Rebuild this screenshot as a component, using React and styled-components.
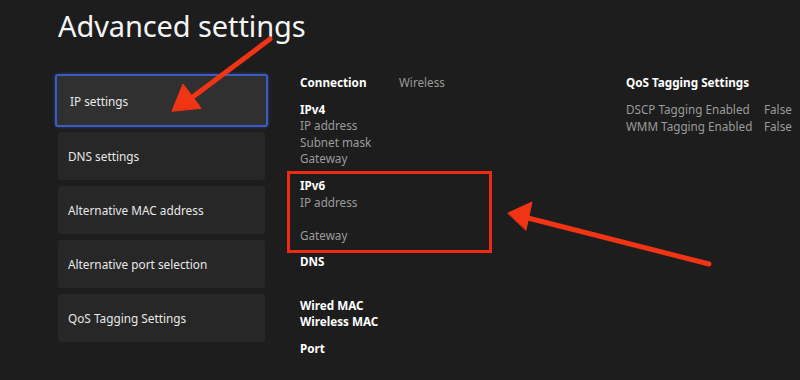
import React from "react";
import styled, { createGlobalStyle } from "styled-components";

const GlobalStyle = createGlobalStyle`
  html, body {
    margin: 0;
    padding: 0;
    background: #1d1d1d;
  }
  body {
    font-family: "Noto Sans", "Open Sans", sans-serif;
    color: #ffffff;
  }
`;

const StyledPage = styled.div`
  position: relative;
  width: 800px;
  height: 380px;
  overflow: hidden;
  background: #1d1d1d;
  padding: 6px 0 0 55px;
  box-sizing: border-box;
`;

const StyledTitle = styled.h1`
  margin: 0 0 0 3px;
  height: 68px;
  font-size: 29px;
  font-weight: 400;
  letter-spacing: -0.1px;
  color: #f4f4f4;
`;

const StyledBody = styled.div`
  display: flex;
  align-items: flex-start;
`;

const StyledMenu = styled.div`
  display: flex;
  flex-direction: column;
  flex-shrink: 0;
  gap: 6px;
  width: 213px;
`;

const StyledMenuItem = styled.div`
  display: flex;
  align-items: center;
  height: ${(p) => (p.$active ? "53px" : "48px")};
  margin: ${(p) => (p.$active ? "0 0 -1px 0" : "0 3px")};
  padding-left: ${(p) => (p.$active ? "13px" : "10px")};
  box-sizing: border-box;
  background: ${(p) => (p.$active ? "#303030" : "#272727")};
  border: ${(p) => (p.$active ? "2px solid #3b5bc4" : "none")};
  border-radius: 3px;
  box-shadow: ${(p) => (p.$active ? "0 0 3px rgba(70, 100, 220, 0.6)" : "none")};
  font-size: 11.8px;
  color: #e8e8e8;
`;

const StyledDetails = styled.div`
  display: flex;
  flex-shrink: 0;
  margin-left: 32px;
  font-size: 11.7px;
  line-height: 16.6px;
`;

const StyledColumn = styled.div`
  flex-shrink: 0;
  width: ${(p) => p.$width}px;
`;

const StyledGroup = styled.div`
  margin-bottom: 10px;
`;

const StyledPair = styled.div`
  display: flex;
  height: 16.6px;
`;

const StyledLabel = styled.span`
  width: ${(p) => p.$width || 99}px;
  font-weight: 700;
  color: #ffffff;
  white-space: nowrap;
`;

const StyledValue = styled.div`
  height: 16.6px;
  color: #9b9b9b;
  white-space: nowrap;
`;

const StyledQosRow = styled.div`
  display: flex;
  height: 17.5px;
  color: #9b9b9b;
  white-space: nowrap;
`;

const StyledQosName = styled.span`
  width: 138px;
`;

const StyledOverlay = styled.svg`
  position: absolute;
  left: 0;
  top: 0;
  pointer-events: none;
`;

const menuItems = [
  "IP settings",
  "DNS settings",
  "Alternative MAC address",
  "Alternative port selection",
  "QoS Tagging Settings",
];

const groups = [
  { title: "IPv4", rows: ["IP address", "Subnet mask", "Gateway"] },
  { title: "IPv6", rows: ["IP address", "", "Gateway"] },
  { title: "DNS", rows: [""] },
];

function App() {
  return (
    <StyledPage>
      <GlobalStyle />
      <StyledTitle>Advanced settings</StyledTitle>
      <StyledBody>
        <StyledMenu>
          {menuItems.map((item, i) => (
            <StyledMenuItem key={item} $active={i === 0}>
              {item}
            </StyledMenuItem>
          ))}
        </StyledMenu>
        <StyledDetails>
          <StyledColumn $width={326}>
            <StyledGroup>
              <StyledPair>
                <StyledLabel>Connection</StyledLabel>
                <StyledValue>Wireless</StyledValue>
              </StyledPair>
            </StyledGroup>
            {groups.map((g) => (
              <StyledGroup key={g.title}>
                <StyledPair>
                  <StyledLabel>{g.title}</StyledLabel>
                </StyledPair>
                {g.rows.map((r, i) => (
                  <StyledValue key={i}>{r}</StyledValue>
                ))}
              </StyledGroup>
            ))}
            <StyledGroup>
              <StyledPair>
                <StyledLabel>Wired MAC</StyledLabel>
              </StyledPair>
              <StyledPair>
                <StyledLabel>Wireless MAC</StyledLabel>
              </StyledPair>
            </StyledGroup>
            <StyledGroup>
              <StyledPair>
                <StyledLabel>Port</StyledLabel>
              </StyledPair>
            </StyledGroup>
          </StyledColumn>
          <StyledColumn $width={174}>
            <StyledGroup>
              <StyledPair>
                <StyledLabel $width={174}>QoS Tagging Settings</StyledLabel>
              </StyledPair>
            </StyledGroup>
            <StyledQosRow>
              <StyledQosName>DSCP Tagging Enabled</StyledQosName>
              <span>False</span>
            </StyledQosRow>
            <StyledQosRow>
              <StyledQosName>WMM Tagging Enabled</StyledQosName>
              <span>False</span>
            </StyledQosRow>
          </StyledColumn>
        </StyledDetails>
      </StyledBody>

      {/* annotations drawn on top of the screenshot */}
      <StyledOverlay width="800" height="380" viewBox="0 0 800 380">
        <rect x="288.5" y="172.5" width="202" height="79" fill="none" stroke="#f02a12" strokeWidth="3" />
        <g fill="#f03414" stroke="#f03414" strokeLinecap="round">
          <line x1="270" y1="39" x2="190" y2="99" strokeWidth="5" />
          <polygon points="172,111 183,84 201,108" strokeWidth="1" strokeLinejoin="round" />
          <line x1="709" y1="264" x2="528" y2="218" strokeWidth="5" />
          <polygon points="508,213 532,202 526,230" strokeWidth="1" strokeLinejoin="round" />
        </g>
      </StyledOverlay>
    </StyledPage>
  );
}

export default App;
